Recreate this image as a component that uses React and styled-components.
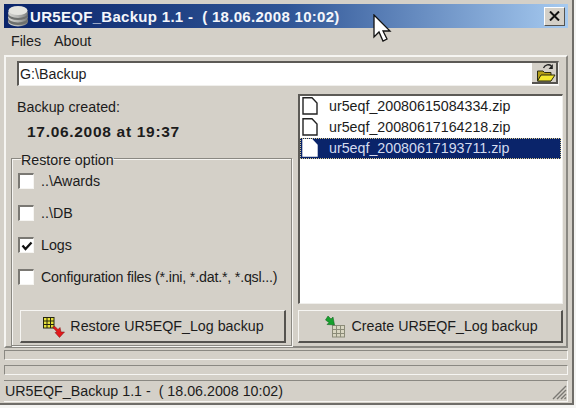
import React from 'react';
import styled, { createGlobalStyle } from 'styled-components';

const GlobalStyle = createGlobalStyle`
  html, body {
    margin: 0;
    padding: 0;
    background: #f4f4f2;
  }
  * {
    box-sizing: border-box;
  }
`;

const Window = styled.div`
  position: relative;
  width: 574px;
  height: 405px;
  display: flex;
  flex-direction: column;
  padding: 4px 4px 1px 4px;
  background: #d4d0c8;
  border-right: 2px solid #6f6d68;
  border-bottom: 2px solid #6f6d68;
  font-family: "Liberation Sans", Arial, sans-serif;
  font-size: 14.25px;
  color: #1c1c1c;
  overflow: hidden;
`;

const TitleBar = styled.div`
  height: 24px;
  flex: none;
  display: flex;
  align-items: center;
  padding: 0 3px 0 3px;
  gap: 1px;
  background: linear-gradient(to right, #0a246a 0%, #2f5596 50%, #a6caf0 100%);
`;

const TitleText = styled.span`
  flex: 1;
  color: #f4f6fb;
  font-size: 15px;
  font-weight: 700;
  letter-spacing: 0.3px;
  white-space: pre;
`;

const CloseButton = styled.div`
  width: 21px;
  height: 19px;
  display: flex;
  align-items: center;
  justify-content: center;
  background: #d4d0c8;
  border: 1px solid;
  border-color: #ffffff #55534f #55534f #ffffff;
`;

const MenuBar = styled.div`
  height: 27px;
  flex: none;
  display: flex;
  align-items: center;
  gap: 13px;
  padding: 0 0 1px 7px;
`;

const PathPanel = styled.div`
  height: 38px;
  flex: none;
  display: flex;
  align-items: center;
  padding: 0 7px 3px 11px;
  border-top: 2px solid #f6f5f2;
  border-left: 2px solid #f6f5f2;
  border-right: 2px solid #8a8882;
`;

const PathField = styled.div`
  flex: 1;
  height: 25px;
  display: flex;
  align-items: center;
  justify-content: space-between;
  padding-left: 1px;
  background: #ffffff;
  border: 1px solid;
  border-color: #5c5a56 #f0efec #f0efec #5c5a56;
  border-top-width: 2px;
  border-left-width: 2px;
`;

const FolderButton = styled.div`
  width: 26px;
  height: 21px;
  align-self: flex-start;
  display: flex;
  align-items: center;
  justify-content: center;
  padding-left: 3px;
  background: #d4d0c8;
  border-right: 2px solid #55534f;
  border-bottom: 2px solid #55534f;
`;

const Columns = styled.div`
  flex: none;
  height: 255px;
  display: flex;
  border-left: 2px solid #f6f5f2;
  border-right: 2px solid #8a8882;
  border-bottom: 2px solid #8a8882;
`;

const LeftPanel = styled.div`
  width: 289px;
  flex: none;
  display: flex;
  flex-direction: column;
  padding: 6px 3px 0 5px;
`;

const RightPanel = styled.div`
  flex: 1;
  display: flex;
  flex-direction: column;
  padding: 1px 3px 0 3px;
`;

const CreatedLabel = styled.div`
  height: 19px;
  margin-left: 6px;
`;

const CreatedValue = styled.div`
  height: 22px;
  margin: 5px 0 0 16px;
  font-weight: 700;
  font-size: 15.5px;
  letter-spacing: 0.7px;
  white-space: nowrap;
`;

const Group = styled.fieldset`
  margin: 7px 0 0 0;
  padding: 0 0 0 6px;
  flex: 1;
  min-height: 0;
  min-width: 0;
  display: flex;
  flex-direction: column;
  border: 1px solid #8a8882;
  box-shadow: inset 1px 1px 0 #f6f5f2, 1px 1px 0 #f6f5f2;
`;

const Legend = styled.legend`
  margin-left: 3px;
  padding: 0;
  height: 13px;
  line-height: 17px;
`;

const OptionRow = styled.label`
  height: 32px;
  flex: none;
  display: flex;
  align-items: center;
  gap: 7px;
  white-space: nowrap;
  letter-spacing: ${({ $tight }) => ($tight ? '-0.2px' : 'normal')};
`;

const CheckBox = styled.span`
  width: 16px;
  height: 16px;
  flex: none;
  display: flex;
  align-items: center;
  justify-content: center;
  background: #ffffff;
  border: 1px solid;
  border-color: #7a7873 #f6f5f2 #f6f5f2 #7a7873;
  border-top-width: 2px;
  border-left-width: 2px;
`;

const BackupButton = styled.div`
  height: 33px;
  flex: none;
  display: flex;
  align-items: center;
  justify-content: center;
  gap: 5px;
  background: #d4d0c8;
  border: 1px solid;
  border-color: #f6f5f2 #55534f #55534f #f6f5f2;
  border-right-width: 2px;
  border-bottom-width: 2px;
`;

const RestoreSlot = styled.div`
  margin: 17px 5px 0 2px;
`;

const CreateSlot = styled.div`
  margin-top: 6px;
`;

const FileList = styled.div`
  height: 210px;
  flex: none;
  background: #ffffff;
  border: 1px solid;
  border-color: #5c5a56 #f0efec #f0efec #5c5a56;
  border-top-width: 2px;
  border-left-width: 2px;
`;

const FileRow = styled.div`
  height: 21px;
  display: flex;
  align-items: center;
  gap: 11px;
  padding: 0 0 2px 2px;
  margin-right: 1px;
  color: ${({ $selected }) => ($selected ? '#d4dcf0' : '#1c1c1c')};
  background: ${({ $selected }) => ($selected ? '#0a246a' : 'transparent')};
  outline: ${({ $selected }) => ($selected ? '1px dotted #d8c98a' : 'none')};
  outline-offset: -1px;
`;

const ProgressBar = styled.div`
  height: 10px;
  flex: none;
  margin-top: ${({ $first }) => ($first ? '2px' : '5px')};
  border: 1px solid;
  border-color: #8a8882 #f6f5f2 #f6f5f2 #8a8882;
`;

const StatusBar = styled.div`
  flex: 1;
  margin-top: 5px;
  display: flex;
  align-items: center;
  padding-left: 1px;
  border-top: 1px solid #8a8882;
  border-right: 1px solid #f6f5f2;
  border-bottom: 1px solid #f6f5f2;
  white-space: pre;
`;

const Grip = styled.svg`
  position: absolute;
  right: 5px;
  bottom: 3px;
`;

const Cursor = styled.svg`
  position: absolute;
  left: 372px;
  top: 14px;
`;

const DatabaseIcon = () => (
  <svg width="22" height="22" viewBox="0 0 22 22">
    <defs>
      <linearGradient id="disc" x1="0" x2="1" y1="0" y2="0">
        <stop offset="0" stopColor="#d6d6d2" />
        <stop offset="0.5" stopColor="#b4b5b2" />
        <stop offset="1" stopColor="#7b7d7c" />
      </linearGradient>
    </defs>
    <ellipse cx="11" cy="16.5" rx="10" ry="5" fill="url(#disc)" />
    <ellipse cx="11" cy="15.5" rx="10" ry="4.5" fill="#6e706e" />
    <ellipse cx="11" cy="12.5" rx="10" ry="5" fill="url(#disc)" />
    <ellipse cx="11" cy="10.5" rx="10" ry="4.5" fill="#6e706e" />
    <ellipse cx="11" cy="8" rx="10" ry="5" fill="url(#disc)" />
    <ellipse cx="11" cy="5.5" rx="9.5" ry="4.5" fill="#e4e4df" />
  </svg>
);

const CloseIcon = () => (
  <svg width="11" height="10" viewBox="0 0 11 10">
    <path d="M1 0.5 L10 9.5 M10 0.5 L1 9.5" stroke="#111" strokeWidth="2" fill="none" />
  </svg>
);

const FolderIcon = () => (
  <svg width="20" height="19" viewBox="0 0 20 19">
    <path d="M1.5 8 H7 L8.5 9.5 H15 V18 H1.5 Z" fill="#b5a016" stroke="#2a2a10" strokeWidth="1" />
    <path d="M1.5 18 L5 12 H19 L15 18 Z" fill="#f3e82e" stroke="#2a2a10" strokeWidth="1" />
    <path d="M7.5 5 C9 1.5 13 0.8 15.5 3" stroke="#222" strokeWidth="1.3" fill="none" />
    <path d="M16.8 1 V6 H12.6 Z" fill="#222" />
  </svg>
);

const FileIcon = ({ selected }) => (
  <svg width="16" height="18" viewBox="0 0 16 18">
    <path
      d="M1 0.8 H10 L15 6 V17 H1 Z"
      fill="#ffffff"
      stroke={selected ? '#ffffff' : '#222222'}
      strokeWidth="1.4"
    />
  </svg>
);

const CheckMark = () => (
  <svg width="12" height="10" viewBox="0 0 12 10">
    <path d="M1.5 4.5 L4.5 8 L10.5 1.5" stroke="#111" strokeWidth="2.3" fill="none" />
  </svg>
);

const RestoreIcon = () => (
  <svg width="24" height="24" viewBox="0 0 24 24">
    <rect x="2.5" y="3.5" width="10.5" height="10.5" fill="#e8e23a" stroke="#26260f" />
    <path d="M2.5 7 H13 M2.5 10.5 H13 M6 3.5 V14 M9.5 3.5 V14" stroke="#26260f" strokeWidth="1" fill="none" />
    <path
      d="M11.5 13 L14 12.5 L17 15.5 L19 13.5 L20 18 H23.5 L18.5 23.5 L14 18.5 L16 18 Z"
      fill="#e3191c"
      stroke="#7d1010"
      strokeWidth="0.5"
    />
  </svg>
);

const CreateIcon = () => (
  <svg width="24" height="24" viewBox="0 0 24 24">
    <rect x="10.5" y="11.5" width="12" height="11.5" fill="#d9d6c2" stroke="#8b8b78" />
    <path d="M10.5 15.5 H22.5 M10.5 19.5 H22.5 M14.5 11.5 V23 M18.5 11.5 V23" stroke="#8b8b78" strokeWidth="1" fill="none" />
    <path
      d="M3.5 6 L6 2 L9 5 L11 3 L12.5 11 L5 10.5 L7 8.5 Z"
      fill="#16a02c"
      stroke="#0a5a18"
      strokeWidth="0.5"
    />
  </svg>
);

const options = [
  { label: '..\\Awards' },
  { label: '..\\DB' },
  { label: 'Logs', checked: true },
  { label: 'Configuration files (*.ini, *.dat.*, *.qsl...)', tight: true },
];

const files = [
  { name: 'ur5eqf_20080615084334.zip' },
  { name: 'ur5eqf_20080617164218.zip' },
  { name: 'ur5eqf_20080617193711.zip', selected: true },
];

export default function App() {
  return (
    <>
      <GlobalStyle />
      <Window>
        <TitleBar>
          <DatabaseIcon />
          <TitleText>UR5EQF_Backup 1.1 -  ( 18.06.2008 10:02)</TitleText>
          <CloseButton>
            <CloseIcon />
          </CloseButton>
        </TitleBar>
        <MenuBar>
          <span>Files</span>
          <span>About</span>
        </MenuBar>
        <PathPanel>
          <PathField>
            G:\Backup
            <FolderButton>
              <FolderIcon />
            </FolderButton>
          </PathField>
        </PathPanel>
        <Columns>
          <LeftPanel>
            <CreatedLabel>Backup created:</CreatedLabel>
            <CreatedValue>17.06.2008 at 19:37</CreatedValue>
            <Group>
              <Legend>Restore option</Legend>
              {options.map((option) => (
                <OptionRow key={option.label} $tight={option.tight}>
                  <CheckBox>{option.checked && <CheckMark />}</CheckBox>
                  {option.label}
                </OptionRow>
              ))}
              <RestoreSlot>
                <BackupButton>
                  <RestoreIcon />
                  Restore UR5EQF_Log backup
                </BackupButton>
              </RestoreSlot>
            </Group>
          </LeftPanel>
          <RightPanel>
            <FileList>
              {files.map((file) => (
                <FileRow key={file.name} $selected={file.selected}>
                  <FileIcon selected={file.selected} />
                  {file.name}
                </FileRow>
              ))}
            </FileList>
            <CreateSlot>
              <BackupButton>
                <CreateIcon />
                Create UR5EQF_Log backup
              </BackupButton>
            </CreateSlot>
          </RightPanel>
        </Columns>
        <ProgressBar $first />
        <ProgressBar />
        <StatusBar>UR5EQF_Backup 1.1 -  ( 18.06.2008 10:02)</StatusBar>
        <Grip width="16" height="16" viewBox="0 0 16 16">
          <path d="M15 2 L2 15 M15 6 L6 15 M15 10 L10 15 M15 13.5 L13.5 15" stroke="#7a7873" strokeWidth="1.4" />
        </Grip>
        <Cursor width="20" height="30" viewBox="0 0 20 30">
          <path
            d="M2 1 V23 L7 18 L11 27 L15 25 L11 17 H18 Z"
            fill="#ffffff"
            stroke="#111111"
            strokeWidth="1.3"
          />
        </Cursor>
      </Window>
    </>
  );
}
